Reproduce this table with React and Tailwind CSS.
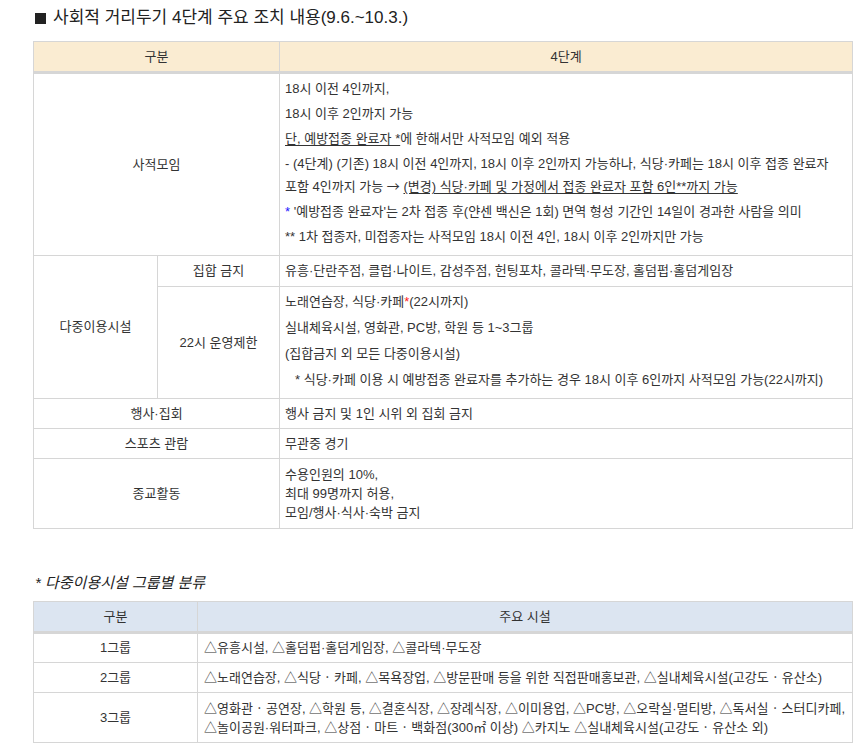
import React from 'react'

const cell = 'border border-[#d6d6d6] align-middle'
const head = 'border border-[#d6d6d6] border-b-[3px] font-normal text-[#333] align-middle text-center'

function Para({ children, className = '' }) {
  return <p className={`leading-[22px] ${className}`}>{children}</p>
}

// wide middle dot as in "식당 · 카페"
function Dot() {
  return <span className="font-['Noto_Sans_CJK_KR',sans-serif]"> · </span>
}

export default function App() {
  return (
    <div className="min-h-[752px] w-[867px] break-keep bg-white pl-[33px] pt-[6px] font-['Liberation_Sans','Noto_Sans_CJK_KR',sans-serif] text-[13px] text-[#333]">
      <h2 className="flex h-[24px] items-center gap-[7px] pl-[2px] text-[17px] font-normal leading-[24px] text-[#222]">
        <span className="inline-block size-[11px] bg-[#222]" />
        <span>사회적 거리두기 4단계 주요 조치 내용(9.6.~10.3.)</span>
      </h2>

      <table className="mt-[11px] w-[819px] table-fixed border-collapse">
        <colgroup>
          <col className="w-[124px]" />
          <col className="w-[122px]" />
          <col className="w-[573px]" />
        </colgroup>
        <thead>
          <tr className="h-[31px] bg-[#faecd2]">
            <th colSpan={2} className={head}>구분</th>
            <th className={head}>4단계</th>
          </tr>
        </thead>
        <tbody>
          <tr className="h-[182px]">
            <td colSpan={2} className={`${cell} text-center`}>사적모임</td>
            <td className={`${cell} px-[5px] pt-[4px] pb-[7px]`}>
              <div className="flex flex-col gap-[3px]">
                <Para>18시 이전 4인까지,</Para>
                <Para>18시 이후 2인까지 가능</Para>
                <Para>
                  <span className="underline underline-offset-2">단, 예방접종 완료자 *</span>에 한해서만 사적모임 예외 적용
                </Para>
                <Para>
                  - (4단계) (기존) 18시 이전 4인까지, 18시 이후 2인까지 가능하나, 식당·카페는 18시 이후 접종 완료자 포함 4인까지 가능{' '}
                  <span className="font-['Noto_Sans_CJK_KR',sans-serif]">→</span>{' '}
                  <span className="underline underline-offset-2">(변경) 식당·카페 및 가정에서 접종 완료자 포함 6인**까지 가능</span>
                </Para>
                <Para>
                  <span className="text-[#1a1aff]">*</span> '예방접종 완료자'는 2차 접종 후(얀센 백신은 1회) 면역 형성 기간인 14일이 경과한 사람을 의미
                </Para>
                <Para>** 1차 접종자, 미접종자는 사적모임 18시 이전 4인, 18시 이후 2인까지만 가능</Para>
              </div>
            </td>
          </tr>
          <tr className="h-[31px]">
            <td rowSpan={2} className={`${cell} text-center`}>다중이용시설</td>
            <td className={`${cell} text-center`}>집합 금지</td>
            <td className={`${cell} px-[5px]`}>유흥·단란주점, 클럽·나이트, 감성주점, 헌팅포차, 콜라텍·무도장, 홀덤펍·홀덤게임장</td>
          </tr>
          <tr className="h-[112px]">
            <td className={`${cell} text-center`}>22시 운영제한</td>
            <td className={`${cell} px-[5px] pt-[4px] pb-[7px]`}>
              <div className="flex flex-col gap-[4px]">
                <Para>
                  노래연습장, 식당·카페<span className="text-[#ff1a1a]">*</span>(22시까지)
                </Para>
                <Para>실내체육시설, 영화관, PC방, 학원 등 1~3그룹</Para>
                <Para>(집합금지 외 모든 다중이용시설)</Para>
                <Para className="whitespace-nowrap pl-[10px]">* 식당·카페 이용 시 예방접종 완료자를 추가하는 경우 18시 이후 6인까지 사적모임 가능(22시까지)</Para>
              </div>
            </td>
          </tr>
          <tr className="h-[30px]">
            <td colSpan={2} className={`${cell} text-center`}>행사·집회</td>
            <td className={`${cell} px-[5px]`}>행사 금지 및 1인 시위 외 집회 금지</td>
          </tr>
          <tr className="h-[30px]">
            <td colSpan={2} className={`${cell} text-center`}>스포츠 관람</td>
            <td className={`${cell} px-[5px]`}>무관중 경기</td>
          </tr>
          <tr className="h-[70px]">
            <td colSpan={2} className={`${cell} text-center`}>종교활동</td>
            <td className={`${cell} px-[5px] leading-[19px]`}>
              수용인원의 10%,
              <br />
              최대 99명까지 허용,
              <br />
              모임/행사·식사·숙박 금지
            </td>
          </tr>
        </tbody>
      </table>

      <p className="mt-[44px] pl-[2px] text-[15px] italic leading-[20px] text-[#222]">* 다중이용시설 그룹별 분류</p>

      <table className="mt-[8px] w-[819px] table-fixed border-collapse">
        <colgroup>
          <col className="w-[164px]" />
          <col className="w-[655px]" />
        </colgroup>
        <thead>
          <tr className="h-[31px] bg-[#dce5f1]">
            <th className={head}>구분</th>
            <th className={head}>주요 시설</th>
          </tr>
        </thead>
        <tbody>
          <tr className="h-[30px]">
            <td className={`${cell} text-center`}>1그룹</td>
            <td className={`${cell} px-[6px]`}>△유흥시설, △홀덤펍·홀덤게임장, △콜라텍·무도장</td>
          </tr>
          <tr className="h-[30px]">
            <td className={`${cell} text-center`}>2그룹</td>
            <td className={`${cell} px-[6px]`}>
              △노래연습장, △식당<Dot />카페, △목욕장업, △방문판매 등을 위한 직접판매홍보관, △실내체육시설(고강도<Dot />유산소)
            </td>
          </tr>
          <tr className="h-[50px]">
            <td className={`${cell} text-center`}>3그룹</td>
            <td className={`${cell} px-[6px] leading-[18px]`}>
              <span className="whitespace-nowrap">
                △영화관<Dot />공연장, △학원 등, △결혼식장, △장례식장, △이미용업, △PC방, △오락실·멀티방, △독서실<Dot />스터디카페,
              </span>
              <br />
              △놀이공원·워터파크, △상점<Dot />마트<Dot />백화점(300㎡ 이상) △카지노 △실내체육시설(고강도<Dot />유산소 외)
            </td>
          </tr>
        </tbody>
      </table>
    </div>
  )
}
